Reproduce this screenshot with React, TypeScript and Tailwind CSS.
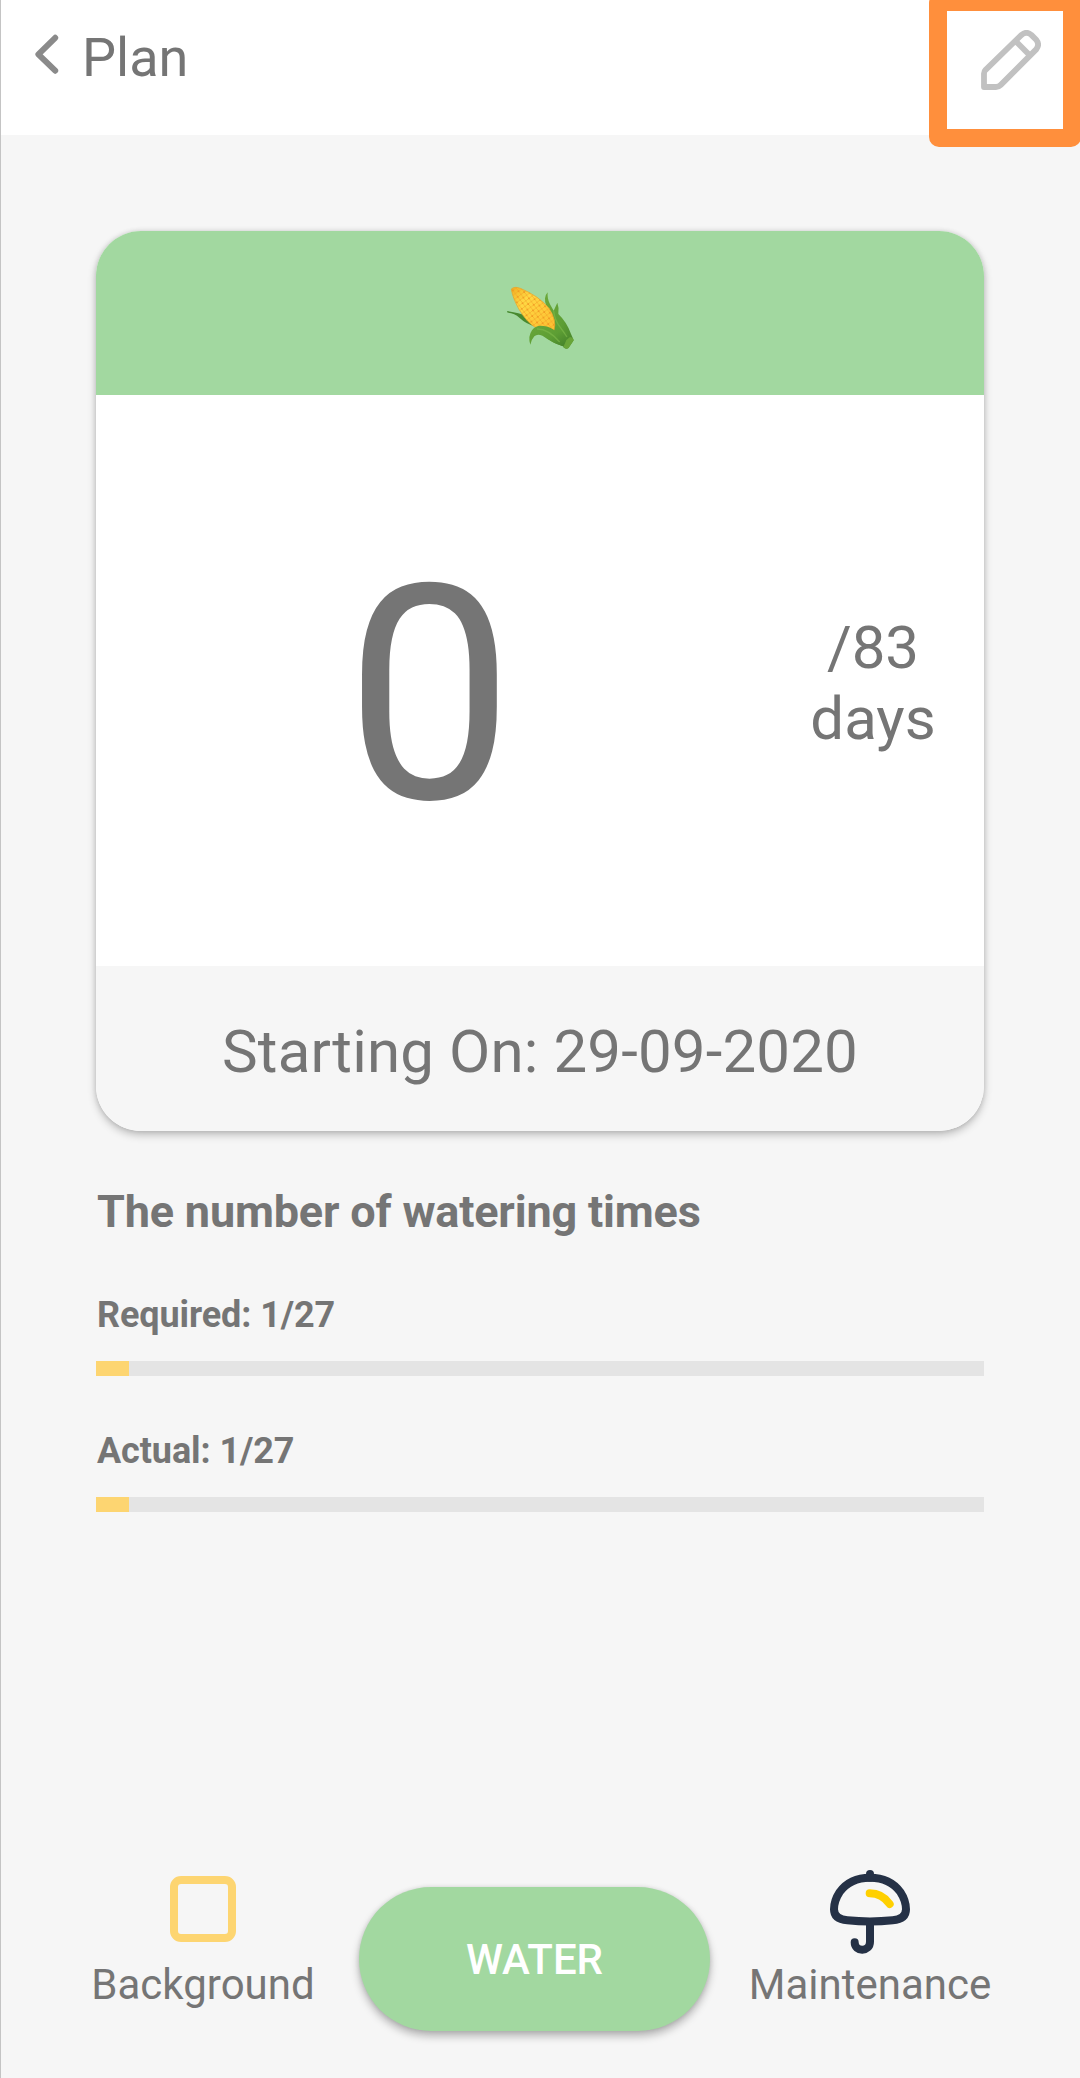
function ChevronLeft() {
  return (
    <svg className="mt-[34px] ml-[32px] h-[41px] w-[27px] shrink-0" viewBox="0 0 27 41" fill="none" stroke="#8a8a8a" strokeWidth="6" strokeLinecap="round" strokeLinejoin="round">
      <path d="M22.2 3.8 5.4 20.3 22.2 36.7" />
    </svg>
  );
}

function Pencil() {
  return (
    <svg className="h-[60px] w-[60px]" viewBox="0 0 60 60" fill="none" stroke="#c1c1c1" strokeWidth="5.8" strokeLinejoin="round">
      <path d="M3 57V43.5Q3 41.5 4.6 39.8L40.5 4.9Q45.5 .8 50.3 4.9L55.2 9.8Q59 14.6 55.2 19.4L19.8 54.9Q17.7 57 15 57Z" />
      <path d="M35 11.5 48.5 25" />
    </svg>
  );
}

function Corn() {
  return (
    <svg className="mt-[4px] h-[110px] w-[120px]" viewBox="0 0 360 330">
      <defs>
        <linearGradient id="cob" x1="0" y1="0" x2="1" y2="1">
          <stop offset="0" stopColor="#f0ae22" />
          <stop offset=".3" stopColor="#ffd844" />
          <stop offset="1" stopColor="#fdbd30" />
        </linearGradient>
        <linearGradient id="husk" x1="0" y1="0" x2="1" y2="1">
          <stop offset="0" stopColor="#6ca83a" />
          <stop offset=".6" stopColor="#5d9e34" />
          <stop offset="1" stopColor="#43802a" />
        </linearGradient>
        <pattern id="kernels" width="17" height="17" patternUnits="userSpaceOnUse" patternTransform="rotate(8)">
          <path d="M0 0 17 17M17 0 0 17" stroke="#f3a428" strokeWidth="1.8" />
          <circle cx="8.5" cy="8.5" r="2.4" fill="#ed8c1c" />
        </pattern>
      </defs>
      <path d="M81 153Q118 158 138 168Q158 180 168 199Q140 194 119 174Q103 158 83 158Z" fill="#47892f" />
      <path d="M203 97Q201 116 210 133L221 152L232 128Q238 144 235 162Q261 187 273 222L280 238Q281 243 276 248L265 264Q259 269 253 264L248 258Q214 249 190 225L195 190L221 188L214 157Q193 137 195 115Q197 103 203 97Z" fill="url(#husk)" />
      <path d="M94 87Q103 78 121 85Q177 108 207 145Q231 181 222 211Q197 218 164 201Q139 185 117 148Q97 112 94 87Z" fill="url(#cob)" />
      <path d="M94 87Q103 78 121 85Q177 108 207 145Q231 181 222 211Q197 218 164 201Q139 185 117 148Q97 112 94 87Z" fill="url(#kernels)" stroke="#e5a329" strokeWidth="2" />
      <path d="M151 254Q143 229 156 211Q168 194 190 198Q213 200 226 214L229 182Q238 205 264 221L264 244L248 259Q223 251 202 237Q176 216 163 229Q154 239 151 254Z" fill="url(#husk)" />
      <path d="M221 153Q224 177 235 194Q249 213 261 231M171 207Q204 206 239 246" fill="none" stroke="#7db849" strokeWidth="4" opacity=".65" />
      <path d="M259 240 270 231Q281 234 281 241L266 264Q260 269 250 262Z" fill="#69a538" />
    </svg>
  );
}

function Umbrella() {
  return (
    <svg className="h-[86px] w-[82px]" viewBox="0 0 246 258" fill="none" stroke="#253146" strokeWidth="24" strokeLinecap="round" strokeLinejoin="round">
      <path d="M123 26Q183 26 214 69Q231 95 231 121Q231 151 191 154Q123 161 55 154Q15 151 15 121Q15 95 32 69Q63 26 123 26Z" />
      <path d="M123 15V26" />
      <path d="M123 160V218C123 250 77 250 77 220" />
      <path d="M122 73Q159 73 182 105" stroke="#ffd000" />
    </svg>
  );
}

function Progress({ label, done, total }: { label: string; done: number; total: number }) {
  return (
    <div>
      <div className="pl-px text-[36px] leading-[42px] font-bold tracking-[-0.1px]">
        {label}: {done}/{total}
      </div>
      <div className="mt-[25px] h-[15px] bg-[#e4e4e4]">
        <div className="h-full bg-[#fdd571]" style={{ width: `${(done / total) * 100}%` }} />
      </div>
    </div>
  );
}

export default function App() {
  return (
    <div className="relative flex h-[2078px] w-[1080px] flex-col overflow-hidden border-l border-[#c4c4c4] bg-[#f6f6f6] font-[Roboto,sans-serif] text-[#757575]">
      <header className="flex h-[135px] shrink-0 items-start bg-white">
        <ChevronLeft />
        <h1 className="mt-[26px] ml-[22px] text-[54px] leading-[64px]">Plan</h1>
      </header>
      <div className="absolute top-[-7px] right-[-1px] flex h-[154px] w-[152px] rounded-[10px] border-[18px] border-[#ff8f3c] bg-white pt-[19px] pl-[34px]">
        <Pencil />
      </div>

      <main className="flex grow flex-col pr-[96px] pl-[95px]">
        <section className="mt-[96px] flex h-[900px] shrink-0 flex-col overflow-hidden rounded-[45px] bg-white shadow-[0_4px_9px_rgba(0,0,0,0.23),0_0_5px_rgba(0,0,0,0.12)]">
          <div className="flex h-[164px] items-center justify-center bg-[#a2d8a0]">
            <Corn />
          </div>
          <div className="flex h-[571px] text-center">
            <div className="w-3/4 pt-[125px] pl-px text-[300px] leading-[352px]">0</div>
            <div className="w-1/4 pt-[217px] text-[60px] leading-[71px]">
              /83
              <br />
              days
            </div>
          </div>
          <div className="h-[165px] bg-[#f6f6f6] pt-[51px] text-center text-[60px] leading-[70px] tracking-[0.15px]">Starting On: 29-09-2020</div>
        </section>

        <h2 className="mt-[54px] pl-px text-[45px] leading-[53px] font-bold tracking-[-0.18px]">The number of watering times</h2>
        <div className="mt-[56px] flex flex-col gap-[54px]">
          <Progress label="Required" done={1} total={27} />
          <Progress label="Actual" done={1} total={27} />
        </div>
      </main>

      <nav className="flex h-[212px] shrink-0 items-start pl-[78px] text-[42px] leading-[50px]">
        <div className="flex w-[248px] flex-col items-center">
          <div className="mt-[10px] h-[66px] w-[66px] rounded-[11px] border-[8px] border-[#fdd571]" />
          <span className="mt-[18px]">Background</span>
        </div>
        <button className="mt-[21px] ml-[32px] h-[144px] w-[351px] rounded-full bg-[#a2d8a0] pt-px font-medium text-white shadow-[0_5px_9px_rgba(0,0,0,0.28),0_0_4px_rgba(0,0,0,0.1)]">WATER</button>
        <div className="ml-[32px] flex w-[256px] flex-col items-center">
          <div className="mt-[3px] mr-[1px]">
            <Umbrella />
          </div>
          <span className="mt-[5px]">Maintenance</span>
        </div>
      </nav>
    </div>
  );
}
